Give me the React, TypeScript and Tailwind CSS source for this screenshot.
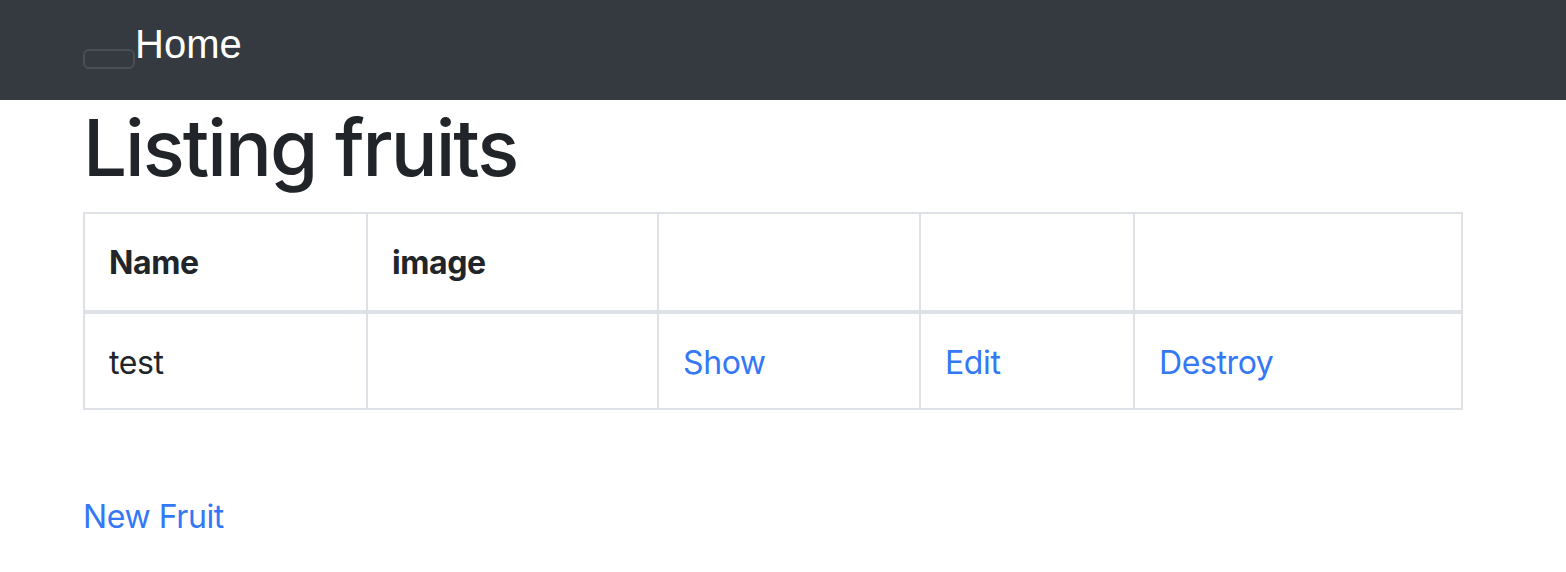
export default function App() {
  const cols = ["w-[283px]", "w-[291px]", "w-[262px]", "w-[214px]", "w-[328px]"];
  return (
    <div className="min-h-screen bg-white text-[#212529] font-['Inter',sans-serif]">
      {/* Navbar */}
      <nav className="h-[100px] bg-[#343a40] px-[83px] flex items-start">
        <button className="mt-[49px] w-[52px] h-[20px] rounded-[6px] border-2 border-[#4a4f55]" />
        <a className="mt-[20px] text-white text-[40px] leading-[48px] font-['Liberation_Sans',Arial,sans-serif]">
          Home
        </a>
      </nav>

      <main className="px-[83px]">
        <h1 className="text-[78px] leading-[96px] font-medium mb-[16px] tracking-[-2px]">Listing fruits</h1>

        <table className="border-collapse text-[32px] leading-[48px] tracking-[-0.4px]">
          <thead>
            <tr>
              <th className={`${cols[0]} border-2 border-[#dee2e6] border-b-4 px-[24px] pt-[25px] pb-[23px] text-left font-bold`}>Name</th>
              <th className={`${cols[1]} border-2 border-[#dee2e6] border-b-4 px-[24px] pt-[25px] pb-[23px] text-left font-bold`}>image</th>
              <th className={`${cols[2]} border-2 border-[#dee2e6] border-b-4 px-[24px] pt-[25px] pb-[23px]`}></th>
              <th className={`${cols[3]} border-2 border-[#dee2e6] border-b-4 px-[24px] pt-[25px] pb-[23px]`}></th>
              <th className={`${cols[4]} border-2 border-[#dee2e6] border-b-4 px-[24px] pt-[25px] pb-[23px]`}></th>
            </tr>
          </thead>
          <tbody>
            <tr>
              <td className="border-2 border-[#dee2e6] px-[24px] pt-[25px] pb-[21px]">test</td>
              <td className="border-2 border-[#dee2e6] px-[24px] pt-[25px] pb-[21px]"></td>
              <td className="border-2 border-[#dee2e6] px-[24px] pt-[25px] pb-[21px]">
                <a className="text-[#3478f6]">Show</a>
              </td>
              <td className="border-2 border-[#dee2e6] px-[24px] pt-[25px] pb-[21px]">
                <a className="text-[#3478f6]">Edit</a>
              </td>
              <td className="border-2 border-[#dee2e6] px-[24px] pt-[25px] pb-[21px]">
                <a className="text-[#3478f6]">Destroy</a>
              </td>
            </tr>
          </tbody>
        </table>

        <div className="mt-[83px] text-[32px] leading-[48px] tracking-[-0.4px]">
          <a className="text-[#3478f6]">New Fruit</a>
        </div>
      </main>
    </div>
  );
}
